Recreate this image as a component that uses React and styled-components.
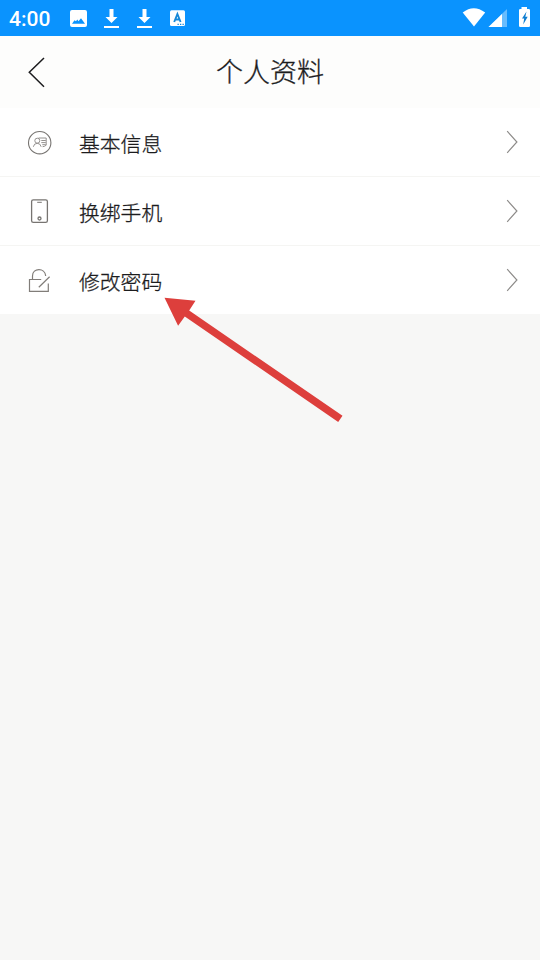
import React from "react";
import styled, { createGlobalStyle } from "styled-components";

const GlobalStyle = createGlobalStyle`
  * { box-sizing: border-box; }
  body { margin: 0; background: #f7f7f6; }
`;

const Screen = styled.div`
  position: relative;
  display: flex;
  flex-direction: column;
  width: 540px;
  height: 960px;
  overflow: hidden;
  background: #f7f7f6;
  color: #1c1c1e;
  font-family: "Noto Sans CJK SC", sans-serif;
`;

const StatusBar = styled.header`
  display: flex;
  align-items: center;
  justify-content: space-between;
  height: 36px;
  padding: 0 9px;
  background: #0a93fe;
  color: #fff;
`;

const StatusGroup = styled.div`
  display: flex;
  align-items: center;
  height: 36px;
`;

const Clock = styled.time`
  width: 54px;
  font: 500 21px/36px Roboto, sans-serif;
  padding-top: 1px;
`;

const Glyph = styled.svg`
  display: block;
  flex: none;
  width: ${(p) => p.$w}px;
  height: ${(p) => p.$h}px;
`;

const TitleBar = styled.nav`
  display: grid;
  grid-template-columns: 74px 1fr 74px;
  align-items: center;
  height: 72px;
  background: #fdfdfc;
`;

const BackButton = styled.button`
  display: flex;
  align-items: center;
  height: 72px;
  padding: 0 0 0 24px;
  border: 0;
  background: none;
`;

const Title = styled.h1`
  margin: 0;
  text-align: center;
  font-size: 27px;
  font-weight: 300;
  -webkit-text-stroke: 0.3px currentColor;
  line-height: 70px;
  height: 72px;
`;

const Menu = styled.ul`
  margin: 0;
  padding: 0;
  list-style: none;
  background: #fff;
`;

const MenuRow = styled.li`
  display: grid;
  grid-template-columns: 79px 1fr 34px;
  align-items: center;
  height: 69px;
  border-bottom: 1px solid #f5f5f3;

  &:last-child {
    height: 68px;
    border-bottom: 0;
  }
`;

const IconCell = styled.span`
  display: flex;
  padding-left: 24px;
`;

const Label = styled.span`
  font-size: 20.8px;
  font-weight: 300;
  -webkit-text-stroke: 0.3px currentColor;
  height: 68px;
  line-height: 70px;
`;

const Pointer = styled.svg`
  position: absolute;
  left: 160px;
  top: 292px;
  width: 190px;
  height: 136px;
  pointer-events: none;
`;

const StatusIcons = () => (
  <Glyph $w={126} $h={36} viewBox="63 0 126 36" fill="#fff">
    <path fillRule="evenodd" d="M72 10h13a2 2 0 0 1 2 2v13a2 2 0 0 1-2 2H72a2 2 0 0 1-2-2V12a2 2 0 0 1 2-2ZM72 23.700h13l-4-5.500-2.500 3-1.200-1.700-1.300 1.700-1.500-1Z" />
    <path d="M109.500 9h4v8h4l-6 6-6-6h4ZM104 26h15v2h-15Z" />
    <path d="M142.500 9h4v8h4l-6 6-6-6h4ZM137 26h15v2h-15Z" />
    <rect x="170" y="10.300" width="15" height="15.700" rx="1.500" />
    <path d="m174.200 22 3.200-8 3.200 8M175.200 19.500h4.400" fill="none" stroke="#1688d8" strokeWidth="1.900" />
    <path d="M177.500 23.700h1.300v1.300h-1.300zM180 23.700h1.300v1.300H180zM182.500 23.700h1.300v1.300h-1.300z" fill="#1688d8" />
  </Glyph>
);

const SystemIcons = () => (
  <Glyph $w={71} $h={36} viewBox="460 0 71 36" fill="#fff">
    <path d="M462.700 12.500Q473.700 4 485.200 12.500L474 26.500Z" />
    <path d="M507 9v18h-18.500Z" opacity=".38" />
    <path d="M502 14v13h-13.500Z" />
    <path d="M521.500 7h5.500v2h1.700q1.300 0 1.300 1.300v15.400q0 1.300-1.300 1.300h-8.400q-1.300 0-1.300-1.300V10.300q0-1.300 1.300-1.300h1.200Z" />
    <path d="m526.500 11.500-4.500 7h2.200l-1 6 4.500-7.700h-2.400Z" fill="#0e7dd0" />
  </Glyph>
);

const ProfileIcon = () => (
  <Glyph $w={32} $h={32} viewBox="24 126 32 32" fill="none" stroke="#777471" strokeWidth="1.100">
    <circle cx="39.700" cy="142.700" r="11.200" />
    <g stroke="#898683" strokeWidth=".9">
      <circle cx="37.300" cy="140.700" r="2.500" />
      <path d="M33.300 146.800q.7-3.500 4-3.500 3.100 0 3.900 3.500M38.500 138h7.700v7.200q-1.800 1.500-3.600 1.500M41.300 140.500h4.500M41.300 142.600h4.500M42.300 144.700h3.500" />
    </g>
  </Glyph>
);

const PhoneIcon = () => (
  <Glyph $w={32} $h={32} viewBox="24 195 32 32" fill="none" stroke="#777471" strokeWidth="1.300">
    <rect x="31.600" y="199.900" width="15.800" height="22.500" rx="1.700" />
    <path d="M37.200 202.300h4.600" strokeWidth="1" />
    <circle cx="39.500" cy="218.500" r="1.500" />
  </Glyph>
);

const LockIcon = () => (
  <Glyph $w={32} $h={32} viewBox="24 264 32 32" fill="none" stroke="#817d79" strokeWidth="1.200">
    <path d="M41.200 279.500H29.500v11.900h18.800V283.500M32.500 279v-3c0-8.300 12.500-8.800 13.200 0M38.800 287.300l10.800-10.500" />
  </Glyph>
);

const Chevron = () => (
  <Glyph $w={14} $h={26} viewBox="500 129 14 26" fill="none" stroke="#8d8b89" strokeWidth="1.200">
    <path d="m501.200 131.200 9.700 10.800-9.700 10.800" />
  </Glyph>
);

const items = [
  { label: "基本信息", Icon: ProfileIcon },
  { label: "换绑手机", Icon: PhoneIcon },
  { label: "修改密码", Icon: LockIcon },
];

export default function App() {
  return (
    <Screen>
      <GlobalStyle />
      <StatusBar>
        <StatusGroup>
          <Clock>4:00</Clock>
          <StatusIcons />
        </StatusGroup>
        <SystemIcons />
      </StatusBar>
      <TitleBar>
        <BackButton aria-label="返回">
          <Glyph $w={24} $h={36} viewBox="24 54 24 36" fill="none" stroke="#1c1c1e" strokeWidth="1.500">
            <path d="M44 58 29.300 72.300 44 86.700" />
          </Glyph>
        </BackButton>
        <Title>个人资料</Title>
      </TitleBar>
      <Menu>
        {items.map(({ label, Icon }) => (
          <MenuRow key={label}>
            <IconCell><Icon /></IconCell>
            <Label>{label}</Label>
            <Chevron />
          </MenuRow>
        ))}
      </Menu>
      <Pointer viewBox="160 292 190 136">
        <path d="m164.500 297.700 31 3-6.300 9.800 153.300 105.300-4.300 6.200-153.400-105.500-6.700 9.300Z" fill="#dd3f3c" />
      </Pointer>
    </Screen>
  );
}
